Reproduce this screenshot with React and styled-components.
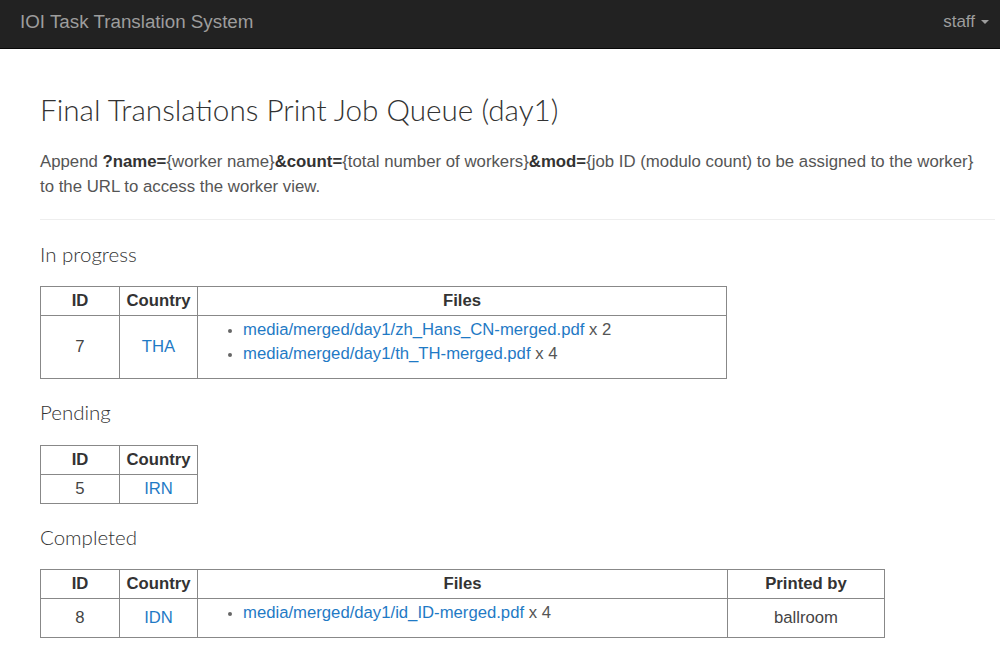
import React from 'react';
import styled, { createGlobalStyle } from 'styled-components';

const GlobalStyle = createGlobalStyle`
  html, body {
    margin: 0;
    padding: 0;
    background: #fff;
  }
  body {
    font-family: "Liberation Sans", Arial, sans-serif;
    font-size: 16.7px;
    line-height: 1.5;
    color: #333;
  }
`;

const inProgress = [
  {
    id: 7,
    country: 'THA',
    files: [
      { path: 'media/merged/day1/zh_Hans_CN-merged.pdf', count: 2 },
      { path: 'media/merged/day1/th_TH-merged.pdf', count: 4 },
    ],
  },
];

const pending = [{ id: 5, country: 'IRN' }];

const completed = [
  {
    id: 8,
    country: 'IDN',
    files: [{ path: 'media/merged/day1/id_ID-merged.pdf', count: 4 }],
    printedBy: 'ballroom',
  },
];

const App = () => {
  return (
    <>
      <GlobalStyle />
      <Navbar>
        <Brand href="#">IOI Task Translation System</Brand>
        <UserMenu>
          staff <Caret />
        </UserMenu>
      </Navbar>

      <Container>
        <PageTitle>Final Translations Print Job Queue (day1)</PageTitle>
        <Intro>
          Append <b>?name=</b>{'{worker name}'}<b>&amp;count=</b>
          {'{total number of workers}'}<b>&amp;mod=</b>
          {'{job ID (modulo count) to be assigned to the worker}'} to the URL to
          access the worker view.
        </Intro>
        <Divider />

        <SectionTitle>In progress</SectionTitle>
        <Table>
          <thead>
            <tr>
              <Th $w={79}>ID</Th>
              <Th $w={78}>Country</Th>
              <Th $w={529}>Files</Th>
            </tr>
          </thead>
          <tbody>
            {inProgress.map((job) => (
              <tr key={job.id}>
                <Td>{job.id}</Td>
                <Td>
                  <Link href="#">{job.country}</Link>
                </Td>
                <FilesCell>
                  <FileList>
                    {job.files.map((f) => (
                      <li key={f.path}>
                        <Link href="#">{f.path}</Link> x {f.count}
                      </li>
                    ))}
                  </FileList>
                </FilesCell>
              </tr>
            ))}
          </tbody>
        </Table>

        <SectionTitle>Pending</SectionTitle>
        <Table>
          <thead>
            <tr>
              <Th $w={79}>ID</Th>
              <Th $w={78}>Country</Th>
            </tr>
          </thead>
          <tbody>
            {pending.map((job) => (
              <tr key={job.id}>
                <Td>{job.id}</Td>
                <Td>
                  <Link href="#">{job.country}</Link>
                </Td>
              </tr>
            ))}
          </tbody>
        </Table>

        <SectionTitle>Completed</SectionTitle>
        <Table>
          <thead>
            <tr>
              <Th $w={79}>ID</Th>
              <Th $w={78}>Country</Th>
              <Th $w={530}>Files</Th>
              <Th $w={157}>Printed by</Th>
            </tr>
          </thead>
          <tbody>
            {completed.map((job) => (
              <tr key={job.id}>
                <Td>{job.id}</Td>
                <Td>
                  <Link href="#">{job.country}</Link>
                </Td>
                <FilesCell>
                  <FileList>
                    {job.files.map((f) => (
                      <li key={f.path}>
                        <Link href="#">{f.path}</Link> x {f.count}
                      </li>
                    ))}
                  </FileList>
                </FilesCell>
                <Td>{job.printedBy}</Td>
              </tr>
            ))}
          </tbody>
        </Table>
      </Container>
    </>
  );
};

export default App;

// Styled Components
const Navbar = styled.nav`
  height: 49px;
  box-sizing: border-box;
  background: #222;
  border-bottom: 1px solid #080808;
  display: flex;
  align-items: center;
  justify-content: space-between;
  padding: 0 11px 4px 20px;
`;

const Brand = styled.a`
  color: #9d9d9d;
  font-size: 18.8px;
  text-decoration: none;
  line-height: 20px;
`;

const UserMenu = styled.div`
  color: #9d9d9d;
  font-size: 17px;
  line-height: 20px;
  display: flex;
  align-items: center;
  gap: 4px;
`;

const Caret = styled.span`
  display: inline-block;
  width: 0;
  height: 0;
  border-top: 4px solid #9d9d9d;
  border-left: 4px solid transparent;
  border-right: 4px solid transparent;
  margin-left: 2px;
`;

const Container = styled.main`
  padding: 20px 5px 20px 40px;
`;

const PageTitle = styled.h1`
  font-family: Lato, "Open Sans", sans-serif;
  font-weight: 300;
  font-size: 29.7px;
  line-height: 1.1;
  color: #333;
  margin: 25px 0 22px;
`;

const Intro = styled.p`
  color: #555;
  font-size: 16.8px;
  margin: 0 0 10px;
  padding-right: 12px;
  line-height: 25px;

  b {
    color: #333;
  }
`;

const Divider = styled.hr`
  border: 0;
  border-top: 1px solid #eee;
  margin: 20px 0 23px;
`;

const SectionTitle = styled.h3`
  font-family: Lato, "Open Sans", sans-serif;
  font-weight: 300;
  font-size: 20.5px;
  line-height: 1.1;
  color: #333;
  margin: 0 0 21px;
`;

const Table = styled.table`
  border-collapse: collapse;
  margin-bottom: 22px;
  color: #444;
  text-align: center;
`;

const Th = styled.th`
  width: ${(p) => p.$w}px;
  box-sizing: border-box;
  border: 1px solid #888;
  padding: 2px 6px;
  font-weight: bold;
  line-height: 24px;
  color: #333;
`;

const Td = styled.td`
  border: 1px solid #888;
  padding: 2px 6px;
  vertical-align: middle;
  line-height: 24px;
`;

const FilesCell = styled(Td)`
  text-align: left;
  vertical-align: top;
`;

const FileList = styled.ul`
  margin: 0 0 10px;
  padding-left: 39px;
  color: #555;

  li::marker {
    color: #666;
    font-size: 13px;
  }
`;

const Link = styled.a`
  color: #1f7ac5;
  text-decoration: none;
`;
